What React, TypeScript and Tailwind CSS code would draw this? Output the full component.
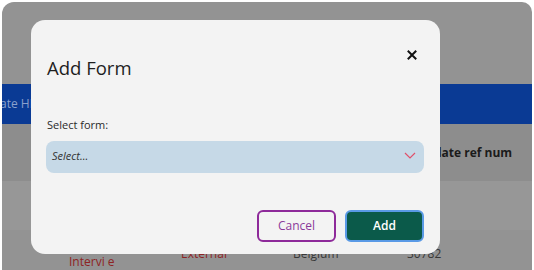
import React from "react";

export default function App() {
  return (
    <div className="w-[534px] h-[270px] bg-white relative overflow-hidden" style={{ fontFamily: '"Open Sans", "Noto Sans", sans-serif' }}>
      <div className="absolute left-[2px] top-[2px] w-[530px] h-[270px] rounded-tl-[12px] rounded-tr-[10px] bg-[#939393] overflow-hidden flex flex-col">
        <div className="h-[82px] shrink-0" />
        <div className="h-[40px] shrink-0 bg-[#0a3a94] flex items-center">
          <span className="text-[12px] text-[#8aa0cc] ml-[-2px]">ate HR</span>
        </div>
        <div className="h-[57px] shrink-0 bg-[#8d8d8d] flex items-center">
          <span className="ml-[432px] text-[12px] font-bold text-[#1b1b1b] whitespace-nowrap">date ref num</span>
        </div>
        <div className="h-[49px] shrink-0 bg-[#979797]" />
        <div className="flex-1 bg-[#939393] relative text-[12px]">
          <span className="absolute left-[67px] top-[23px] text-[#8e2424]">Intervi e</span>
          <span className="absolute left-[179px] top-[15px] text-[#8e2424]">External</span>
          <span className="absolute left-[291px] top-[15px] text-[#383838]">Belgium</span>
          <span className="absolute left-[405px] top-[15px] text-[#383838]">30782</span>
        </div>
      </div>

      <div className="absolute left-[31px] top-[20px] w-[409px] h-[234px] rounded-[14px] bg-[#f3f3f3] flex flex-col px-[15px]">
        <div className="flex items-center justify-between mt-[34px] pr-[8px]">
          <h2 className="text-[18.5px] leading-[28px] text-[#1e1e1e] ml-[1px]">Add Form</h2>
          <svg width="10" height="10" viewBox="0 0 10 10" className="mt-[-26px]">
            <path d="M1.5 1.5 L8.5 8.5 M8.5 1.5 L1.5 8.5" stroke="#111" strokeWidth="2" strokeLinecap="square" />
          </svg>
        </div>
        <label className="mt-[35px] text-[11px] text-[#2a2a2a] ml-[1px]">Select form:</label>
        <div className="mt-[7px] h-[32px] w-[378px] rounded-[8px] bg-[#c6d9e7] flex items-center justify-between px-[6px]">
          <span className="text-[11px] italic text-[#333]">Select...</span>
          <svg width="12" height="7" viewBox="0 0 12 7" className="mr-[2px] mt-[-2px]">
            <path d="M1 1 L6 6 L11 1" stroke="#e0506a" strokeWidth="1.2" fill="none" />
          </svg>
        </div>
        <div className="flex justify-end gap-[9px] mt-[37px] w-[378px]">
          <button className="w-[79px] h-[32px] rounded-[6px] border-2 border-[#8e2a9a] text-[12px] text-[#8b3a9b] bg-[#f3f3f3]">Cancel</button>
          <button className="w-[79px] h-[32px] rounded-[6px] border-2 border-[#5a9ae6] bg-[#0b5a4a] text-[12px] font-semibold text-white">Add</button>
        </div>
      </div>
    </div>
  );
}
